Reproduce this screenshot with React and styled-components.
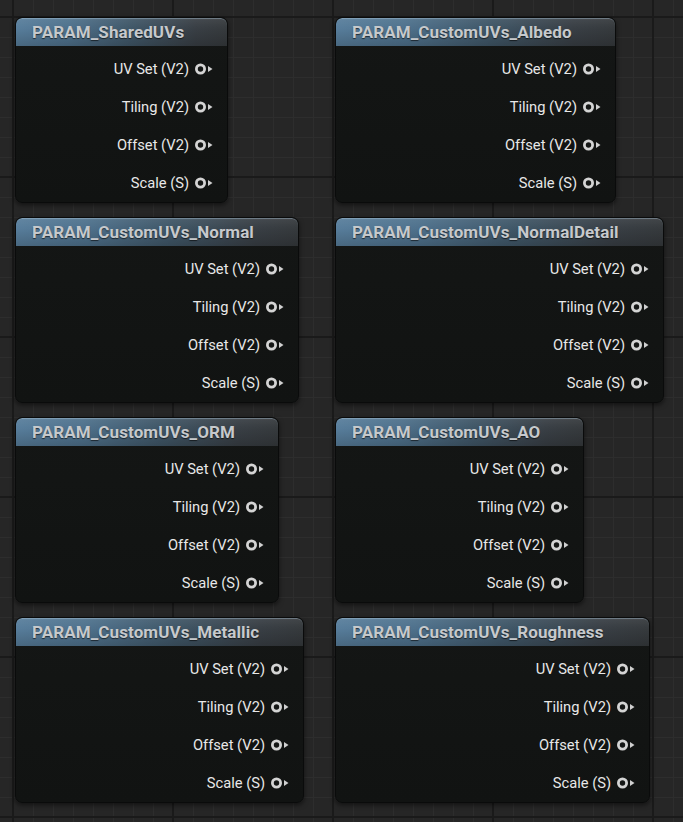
import React from "react";
import styled, { createGlobalStyle } from "styled-components";

const Global = createGlobalStyle`
  html, body { margin: 0; padding: 0; background: #262626; }
  body { width: 683px; height: 822px; overflow: hidden; }
`;

const Canvas = styled.div`
  width: 683px;
  height: 822px;
  box-sizing: border-box;
  padding: 17px 0 0 15px;
  display: grid;
  grid-template-columns: 320px 320px;
  grid-auto-rows: 186px;
  row-gap: 14px;
  align-content: start;
  background-color: #262626;
  background-image:
    linear-gradient(to right, #1a1a1a 2px, transparent 2px),
    linear-gradient(to bottom, #1a1a1a 2px, transparent 2px),
    linear-gradient(to right, #2d2d2d 1px, transparent 1px),
    linear-gradient(to bottom, #2d2d2d 1px, transparent 1px);
  background-size: 160px 160px, 160px 160px, 20px 20px, 20px 20px;
  background-position: 12px 16px, 12px 16px, 13px 17px, 13px 17px;
  font-family: Roboto, "Liberation Sans", sans-serif;
`;

const Node = styled.div`
  justify-self: start;
  width: ${(p) => p.$w}px;
  box-sizing: border-box;
  display: flex;
  flex-direction: column;
  border: 1px solid #0a0b0b;
  border-radius: 7px;
  background: linear-gradient(to bottom, #141615, #111312);
  box-shadow: 0 2px 5px rgba(0, 0, 0, 0.55);
  overflow: hidden;
`;

const Header = styled.div`
  height: 28px;
  display: flex;
  align-items: center;
  padding-left: 16px;
  border-radius: 6px 6px 0 0;
  background:
    linear-gradient(to bottom, rgba(255,255,255,0.14) 0px, rgba(255,255,255,0.05) 2px, rgba(0,0,0,0) 10px, rgba(0,0,0,0.18) 100%),
    linear-gradient(to right, #587e9c 0%, #4f728d 25%, #405768 55%, #393f45 85%, #363a3d 100%);
  box-shadow: inset 0 1px 0 rgba(170, 195, 215, 0.35);
  color: #c6c9cc;
  font-weight: 700;
  font-size: 17px;
  letter-spacing: 0.1px;
  text-shadow: 0 1px 1px rgba(0, 0, 0, 0.6);
  white-space: nowrap;
`;

const Body = styled.div`
  padding: 4px 13px 0 0;
  display: flex;
  flex-direction: column;
`;

const PinRow = styled.div`
  height: 38px;
  display: flex;
  align-items: center;
  justify-content: flex-end;
  gap: 6px;
  color: #e8e8e8;
  font-size: 14.7px;
  white-space: nowrap;
`;

const PinIcon = styled.svg`
  width: 19px;
  height: 12px;
  flex: none;
`;

function Pin() {
  return (
    <PinIcon viewBox="0 0 19 12">
      <circle cx="5.5" cy="6" r="4.1" fill="#141615" stroke="#d4d4d4" strokeWidth="2.8" />
      <polygon points="13,3 17.5,6 13,9" fill="#d0d0d0" />
    </PinIcon>
  );
}

const pins = ["UV Set (V2)", "Tiling (V2)", "Offset (V2)", "Scale (S)"];

const nodes = [
  { name: "PARAM_SharedUVs", w: 213 },
  { name: "PARAM_CustomUVs_Albedo", w: 281 },
  { name: "PARAM_CustomUVs_Normal", w: 284 },
  { name: "PARAM_CustomUVs_NormalDetail", w: 329 },
  { name: "PARAM_CustomUVs_ORM", w: 264 },
  { name: "PARAM_CustomUVs_AO", w: 249 },
  { name: "PARAM_CustomUVs_Metallic", w: 289 },
  { name: "PARAM_CustomUVs_Roughness", w: 315 },
];

export default function App() {
  return (
    <>
      <Global />
      <Canvas>
        {nodes.map((n) => (
          <Node key={n.name} $w={n.w}>
            <Header>{n.name}</Header>
            <Body>
              {pins.map((p) => (
                <PinRow key={p}>
                  {p}
                  <Pin />
                </PinRow>
              ))}
            </Body>
          </Node>
        ))}
      </Canvas>
    </>
  );
}
